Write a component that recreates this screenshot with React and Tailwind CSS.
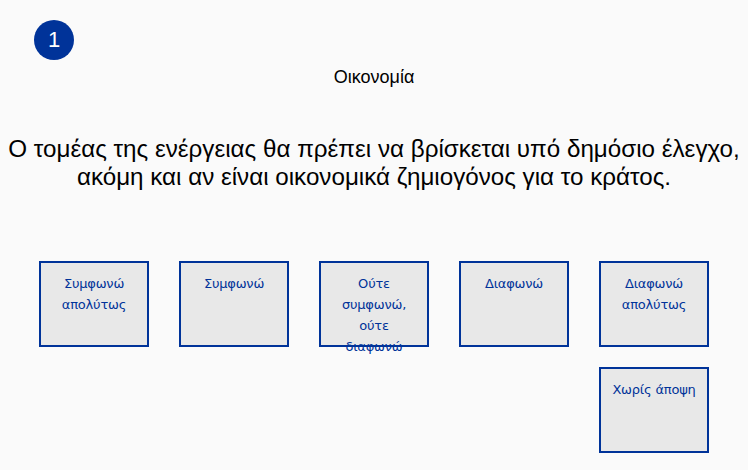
import React from 'react';

const options = [
  ['Συμφωνώ', 'απολύτως'],
  ['Συμφωνώ'],
  ['Ούτε', 'συμφωνώ,', 'ούτε', 'διαφωνώ'],
  ['Διαφωνώ'],
  ['Διαφωνώ', 'απολύτως'],
];

function Choice({ lines, className = '' }) {
  return (
    <button className={`h-[86px] border-2 border-[#003399] bg-[#e8e8e8] text-[#003399] text-[13px] leading-[21px] px-[4px] pt-[10px] flex flex-col items-center justify-start text-center tracking-[-0.2px] whitespace-nowrap ${className}`}>
      {lines.map((l, i) => (
        <span key={i}>{l}</span>
      ))}
    </button>
  );
}

export default function App() {
  return (
    <div className="w-[748px] h-[470px] bg-[#fafafa] overflow-hidden relative" style={{ fontFamily: '"Liberation Sans", Arial, sans-serif' }}>
      <div className="pt-[20px] pl-[34px]">
        <div className="w-[40px] h-[40px] rounded-full bg-[#003399] text-white flex items-center justify-center text-[22px] leading-none">1</div>
      </div>
      <div className="text-center text-[18px] text-black mt-[7px] leading-[21px]">Οικονομία</div>
      <div className="text-center text-[24.2px] text-black mt-[47px] leading-[28px]">
        Ο τομέας της ενέργειας θα πρέπει να βρίσκεται υπό δημόσιο έλεγχο,<br />
        ακόμη και αν είναι οικονομικά ζημιογόνος για το κράτος.
      </div>
      <div className="grid grid-cols-[repeat(5,110px)] gap-x-[30px] gap-y-[20px] justify-center mt-[70px]" style={{ fontFamily: '"DejaVu Sans", Verdana, sans-serif' }}>
        {options.map((o, i) => (
          <Choice key={i} lines={o} />
        ))}
        <Choice lines={['Χωρίς άποψη']} className="col-start-5" />
      </div>
    </div>
  );
}
